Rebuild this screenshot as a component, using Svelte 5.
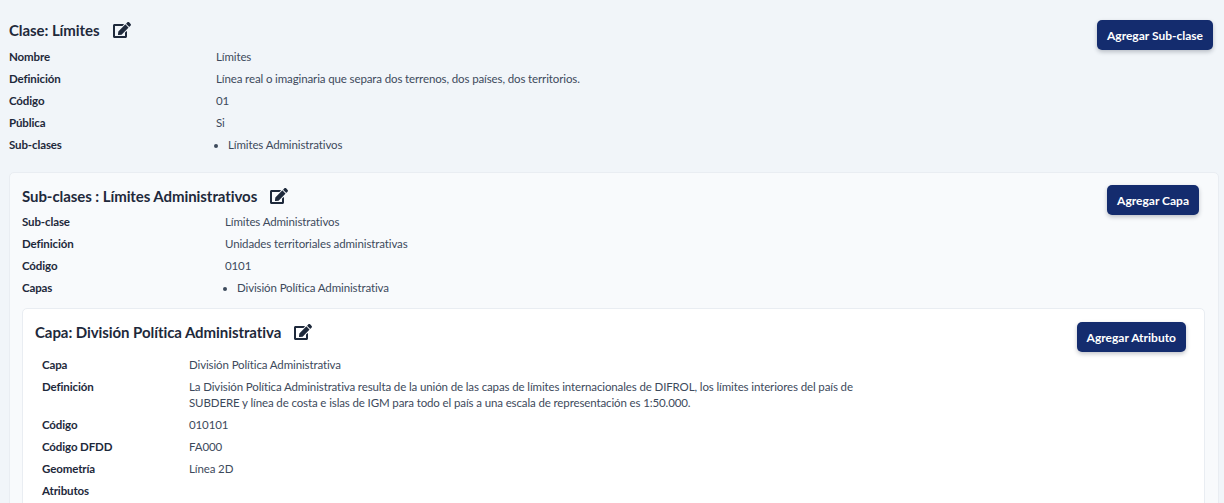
<script>
  const editPath = "M402.6 83.2l90.2 90.2c3.8 3.8 3.8 10 0 13.8L274.4 405.6l-92.8 10.3c-12.4 1.4-22.9-9.1-21.5-21.5l10.3-92.8L388.8 83.2c3.8-3.8 10-3.8 13.8 0zm162-22.9l-48.8-48.8c-15.2-15.2-39.9-15.2-55.2 0l-35.4 35.4c-3.8 3.8-3.8 10 0 13.8l90.2 90.2c3.8 3.8 10 3.8 13.8 0l35.4-35.4c15.2-15.3 15.2-40 0-55.2zM384 346.2V448H64V128h229.8c3.2 0 6.2-1.3 8.5-3.5l40-40c7.6-7.6 2.2-20.5-8.5-20.5H48C21.5 64 0 85.5 0 112v352c0 26.5 21.5 48 48 48h352c26.5 0 48-21.5 48-48V306.2c0-10.7-12.9-16-20.5-8.5l-40 40c-2.2 2.3-3.5 5.3-3.5 8.5z";

  const clase = [
    ["Nombre", "Límites"],
    ["Definición", "Línea real o imaginaria que separa dos terrenos, dos países, dos territorios."],
    ["Código", "01"],
    ["Pública", "Si"]
  ];
  const subclase = [
    ["Sub-clase", "Límites Administrativos"],
    ["Definición", "Unidades territoriales administrativas"],
    ["Código", "0101"]
  ];
  const capa = [
    ["Capa", "División Política Administrativa"],
    ["Definición", "La División Política Administrativa resulta de la unión de las capas de límites internacionales de DIFROL, los límites interiores del país de SUBDERE y línea de costa e islas de IGM para todo el país a una escala de representación es 1:50.000."],
    ["Código", "010101"],
    ["Código DFDD", "FA000"],
    ["Geometría", "Línea 2D"]
  ];
</script>

{#snippet editIcon()}
  <svg class="edit" viewBox="0 0 576 512" aria-hidden="true"><path d={editPath} /></svg>
{/snippet}

{#snippet rows(items)}
  {#each items as [label, value]}
    <dt>{label}</dt>
    <dd>{value}</dd>
  {/each}
{/snippet}

<main class="page">
  <section class="clase">
    <header class="head">
      <h2>Clase: Límites {@render editIcon()}</h2>
      <button>Agregar Sub-clase</button>
    </header>
    <dl class="info">
      {@render rows(clase)}
      <dt>Sub-clases</dt>
      <dd><ul><li>Límites Administrativos</li></ul></dd>
    </dl>
  </section>

  <section class="card subclase">
    <header class="head">
      <h2>Sub-clases : Límites Administrativos {@render editIcon()}</h2>
      <button>Agregar Capa</button>
    </header>
    <dl class="info">
      {@render rows(subclase)}
      <dt>Capas</dt>
      <dd><ul><li>División Política Administrativa</li></ul></dd>
    </dl>

    <section class="card capa">
      <header class="head">
        <h2>Capa: División Política Administrativa {@render editIcon()}</h2>
        <button>Agregar Atributo</button>
      </header>
      <dl class="info">
        {@render rows(capa)}
        <dt>Atributos</dt>
        <dd></dd>
      </dl>
    </section>
  </section>
</main>

<style>
  :global(html), :global(body) {
    overflow: hidden;
    height: 503px;
  }
  :global(body) {
    background: #f1f5f9;
  }
  .page {
    font-family: "Lato", "Open Sans", sans-serif;
    font-size: 11.5px;
    letter-spacing: -0.12px;
    color: #3d4a5c;
    padding: 15px 5px 0 9px;
  }
  .head {
    display: flex;
    justify-content: space-between;
    align-items: flex-start;
    height: 30px;
  }
  h2 {
    margin: 0;
    font-size: 15px;
    font-weight: 700;
    letter-spacing: -0.07px;
    color: #1e293b;
    display: flex;
    align-items: center;
    gap: 13px;
    height: 30px;
  }
  .edit {
    width: 18px;
    height: 16px;
    fill: #1e293b;
  }
  button {
    font: inherit;
    font-size: 12px;
    font-weight: 700;
    letter-spacing: 0;
    color: #fff;
    background: #142c6e;
    border: 0;
    border-radius: 5px;
    height: 30px;
    padding: 0 10px;
    margin-top: 5px;
    box-shadow: 0 2px 4px rgba(15, 23, 42, 0.25);
  }
  .clase > .head {
    padding-right: 6px;
    margin-bottom: 1px;
  }
  .info {
    margin: 0;
    display: grid;
    grid-template-columns: 207px 1fr;
    line-height: 22px;
  }
  dt {
    font-weight: 700;
    color: #1e293b;
  }
  dd {
    margin: 0;
    max-width: 680px;
  }
  ul {
    margin: 0;
    padding-left: 12px;
  }
  .card {
    border: 1px solid #e9edf2;
    border-radius: 5px;
  }
  .subclase {
    background: #f8fafc;
    margin-top: 16px;
    padding: 8px 13px 30px 12px;
  }
  .subclase > .head {
    padding-right: 6px;
  }
  .subclase > .head button {
    margin-top: 4px;
  }
  .subclase > .info {
    grid-template-columns: 203px 1fr;
  }
  .capa {
    background: #fff;
    margin-top: 9px;
    padding: 8px 18px 30px 12px;
  }
  .capa > .head {
    margin-bottom: 7px;
  }
  .capa > .info {
    padding-left: 7px;
    grid-template-columns: 147px 1fr;
  }
  .capa > .info dd {
    line-height: 16px;
    padding: 3px 0;
  }
</style>
